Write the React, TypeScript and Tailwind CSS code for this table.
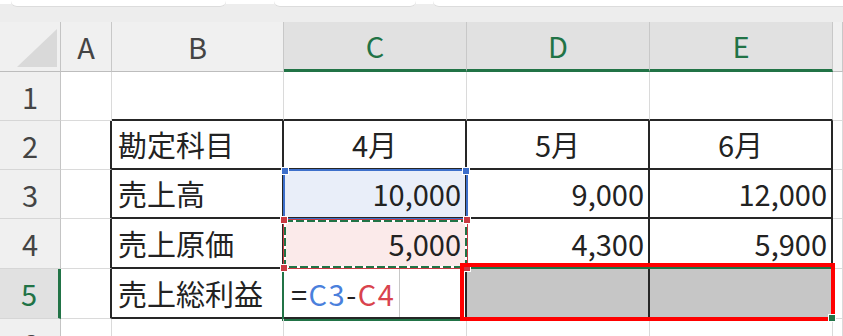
import React from "react";

type Align = "left" | "center" | "right" | "edit";
type CellData = {
  v?: React.ReactNode;
  a?: Align;
  bg?: string;
  over?: React.ReactNode;
};

const cols = ["A", "B", "C", "D", "E", ""];
const selectedCols = [2, 3, 4];

function Formula() {
  return (
    <span className="tracking-[1.5px]">
      <span className="text-[#222]">=</span>
      <span className="text-[#4a80dc]">C3</span>
      <span className="text-[#222]">-</span>
      <span className="text-[#d9434d]">C4</span>
    </span>
  );
}

function Handle({ className }: { className: string }) {
  return (
    <div className={"absolute h-[8px] w-[8px] border border-white " + className} />
  );
}

// blue reference frame around C3
const blueFrame = (
  <div className="absolute -top-[1px] -right-[3px] -bottom-[3px] -left-[1px] border-2 border-[#3d6fcb]">
    <Handle className="-top-[4px] -left-[4px] bg-[#3d6fcb]" />
    <Handle className="-top-[4px] -right-[4px] bg-[#3d6fcb]" />
  </div>
);

// red reference frame + copy marquee around C4
const redFrame = (
  <div className="absolute top-0 -right-[3px] -bottom-[2px] -left-[1px] z-10 border border-[#c93a42]">
    <svg className="absolute inset-0 h-full w-full" preserveAspectRatio="none" viewBox="0 0 183 48">
      <rect x="1" y="1" width="181" height="46" fill="none" stroke="#ffffff" strokeWidth="2" />
      <rect
        x="1"
        y="1"
        width="181"
        height="46"
        fill="none"
        stroke="#217346"
        strokeWidth="2"
        strokeDasharray="8 3"
      />
    </svg>
    <Handle className="-top-[4px] -left-[4px] bg-[#c93a42]" />
    <Handle className="-top-[4px] -right-[4px] bg-[#c93a42]" />
    <Handle className="-bottom-[4px] -left-[4px] bg-[#c93a42]" />
    <Handle className="-bottom-[4px] -right-[4px] bg-[#c93a42]" />
  </div>
);

// active range C5:E5
const selection = (
  <div className="absolute -top-[2px] -bottom-[4px] -left-[2px] w-[552px] border-2 border-[#217346]" />
);

// red annotation box over D5:E5
const annotation = (
  <div className="absolute -top-[6px] -left-[7px] z-20 h-[58px] w-[375px] border-4 border-[#ff0000]" />
);

const fillHandle = (
  <div className="absolute -right-[5px] -bottom-[5px] z-30 h-[8px] w-[8px] border border-white bg-[#217346]" />
);

const rows: CellData[][] = [
  [{}, {}, {}, {}, {}, {}],
  [
    {},
    { v: "勘定科目", a: "left" },
    { v: "4月", a: "center" },
    { v: "5月", a: "center" },
    { v: "6月", a: "center" },
    {},
  ],
  [
    {},
    { v: "売上高", a: "left" },
    { v: "10,000", a: "right", bg: "bg-[#e9eef9]", over: blueFrame },
    { v: "9,000", a: "right" },
    { v: "12,000", a: "right" },
    {},
  ],
  [
    {},
    { v: "売上原価", a: "left" },
    { v: "5,000", a: "right", bg: "bg-[#fbeaea]", over: redFrame },
    { v: "4,300", a: "right" },
    { v: "5,900", a: "right" },
    {},
  ],
  [
    {},
    { v: "売上総利益", a: "left" },
    { v: <Formula />, a: "edit", over: selection },
    { bg: "bg-[#c6c6c6]", over: annotation },
    { bg: "bg-[#c6c6c6]", over: fillHandle },
    {},
  ],
  [{}, {}, {}, {}, {}, {}],
];

function borders(r: number, c: number) {
  // r is the sheet row (1-based), c the column index (A = 0)
  const rightDark = r >= 2 && r <= 5 && c <= 4;
  const bottomDark = r >= 1 && r <= 5 && c >= 1 && c <= 4;
  const right = rightDark
    ? "border-r-2 border-r-[#262626]"
    : "border-r border-r-[#dadada]";
  const bottom = bottomDark
    ? "border-b-2 border-b-[#262626]"
    : "border-b border-b-[#dadada]";
  return right + " " + bottom;
}

function alignClass(a?: Align) {
  if (a === "left") return "justify-start pl-[6px]";
  if (a === "center") return "justify-center";
  if (a === "right") return "justify-end pr-[4px]";
  return "";
}

function TopStrip() {
  return (
    <div className="flex h-[22px] items-start bg-[#ededed]">
      <div className="h-[4px] w-[11px] bg-white" />
      <div className="h-[7px] w-[215px] rounded-b-[6px] border-b border-[#dcdcdc] bg-white" />
      <div className="h-[4px] w-[48px] bg-white" />
      <div className="h-[7px] w-[142px] rounded-b-[6px] border-b border-[#dcdcdc] bg-white" />
      <div className="h-[4px] w-[17px] bg-white" />
      <div className="h-[7px] flex-1 rounded-bl-[6px] border-b border-[#dcdcdc] bg-white" />
    </div>
  );
}

export default function App() {
  return (
    <div className="h-[336px] w-[843px] overflow-hidden bg-white font-['Noto_Sans_CJK_JP','Noto_Sans',sans-serif] text-[29px] leading-none text-[#222]">
      <TopStrip />
      <div className="grid grid-cols-[61px_51px_172px_183px_183px_183px_1fr] grid-rows-[50px_49px_49px_49px_50px_50px_49px]">
        {/* corner */}
        <div className="flex items-end justify-end border-r border-b border-r-[#c4c4c4] border-b-[#bdbdbd] bg-[#f0f0f0] pr-[3px] pb-[4px]">
          <svg width="40" height="38" viewBox="0 0 40 38">
            <polygon points="0,38 40,38 40,0" fill="#d9d9d9" />
          </svg>
        </div>

        {cols.map((name, i) =>
          selectedCols.includes(i) ? (
            <div
              key={"h" + i}
              className="flex items-center justify-center border-r border-b-[3px] border-r-[#c8c8c8] border-b-[#217346] bg-[#e1e1e1] text-[#217346]"
            >
              {name}
            </div>
          ) : (
            <div
              key={"h" + i}
              className="flex items-center justify-center border-r border-b border-r-[#c8c8c8] border-b-[#bdbdbd] bg-[#f0f0f0] text-[#444]"
            >
              {name}
            </div>
          )
        )}

        {rows.map((row, ri) => {
          const r = ri + 1;
          return (
            <React.Fragment key={"r" + r}>
              {r === 5 ? (
                <div className="flex items-center justify-center border-r-[3px] border-b border-r-[#217346] border-b-[#d6d6d6] bg-[#e1e1e1] text-[#217346]">
                  {r}
                </div>
              ) : (
                <div className="flex items-center justify-center border-r border-b border-r-[#c4c4c4] border-b-[#d6d6d6] bg-[#f0f0f0] text-[#444]">
                  {r}
                </div>
              )}
              {row.map((cell, c) => (
                <div
                  key={c}
                  className={
                    "relative flex items-center " +
                    borders(r, c) +
                    " " +
                    alignClass(cell.a) +
                    " " +
                    (cell.bg ?? "")
                  }
                >
                  {cell.a === "edit" ? (
                    <div className="flex h-full w-[116px] items-center border-r border-r-[#c8c8c8] pl-[7px]">
                      {cell.v}
                    </div>
                  ) : (
                    cell.v
                  )}
                  {cell.over}
                </div>
              ))}
            </React.Fragment>
          );
        })}
      </div>
    </div>
  );
}
